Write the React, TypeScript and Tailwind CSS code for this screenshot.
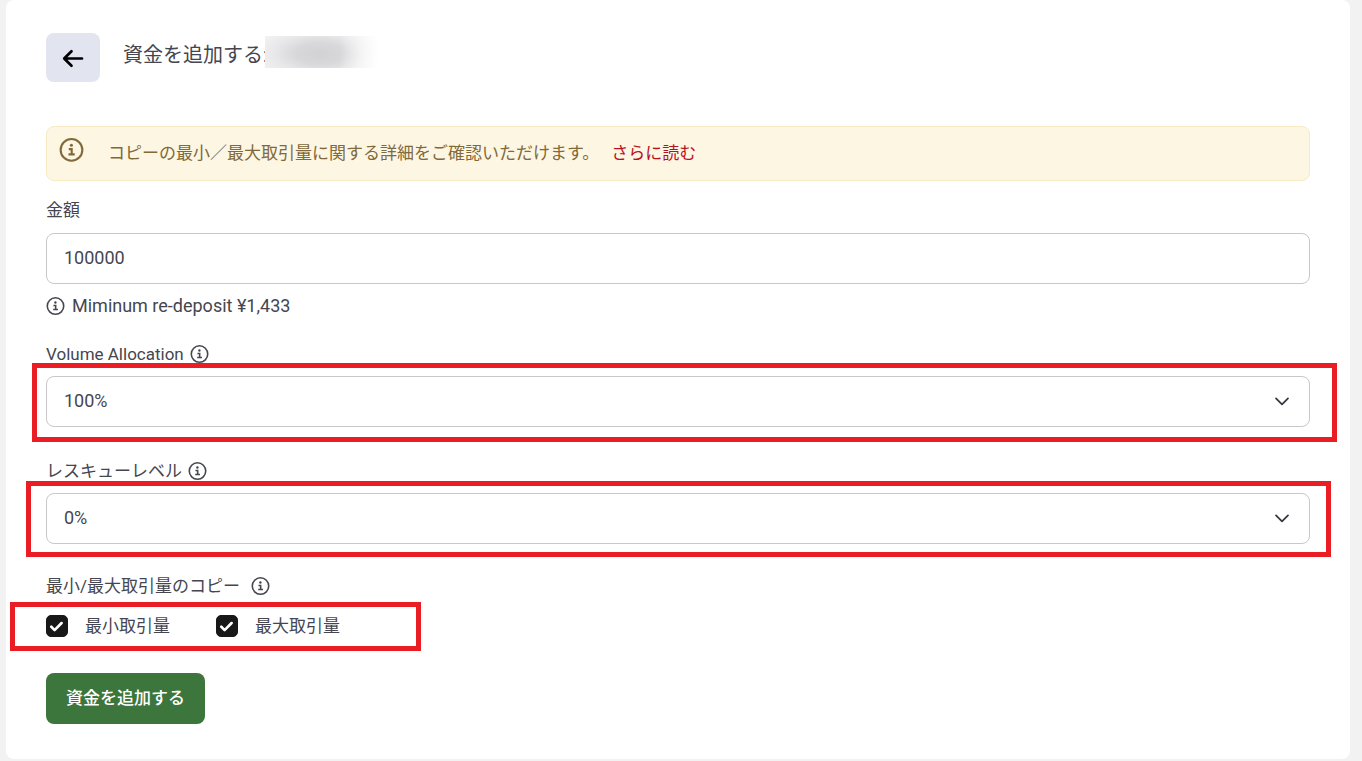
import { useState } from 'react';
import type { ReactNode } from 'react';

function InfoIcon({ className }: { className: string }) {
  return (
    <svg viewBox="0 0 24 24" fill="none" stroke="currentColor" strokeWidth="2" className={className} aria-hidden="true">
      <circle cx="12" cy="11.4" r="10.4" />
      <circle cx="11.9" cy="7" r="1.5" fill="currentColor" stroke="none" />
      <path d="M9.4 10.7h2.8v5M9.1 15.7h6" />
    </svg>
  );
}

function Highlight({ className }: { className: string }) {
  return <div className={`pointer-events-none absolute border-[5px] border-[#ea1c24] ${className}`} />;
}

type SelectFieldProps = {
  id: string;
  label: string;
  options: string[];
  children: ReactNode;
};

function SelectField({ id, label, options, children }: SelectFieldProps) {
  return (
    <div>
      <label htmlFor={id} className="mb-[9px] flex h-[26px] items-center gap-[6px]">
        {label}
        <InfoIcon className="size-[19px] overflow-visible" />
      </label>
      <div className="relative">
        <select
          id={id}
          className="block h-[51px] w-full appearance-none rounded-lg border border-[#c8c8cb] bg-white px-[17px] pb-[2px] text-[18px]"
        >
          {options.map((option) => (
            <option key={option}>{option}</option>
          ))}
        </select>
        <svg
          viewBox="0 0 16 16"
          fill="none"
          stroke="#343a40"
          strokeWidth="1.8"
          strokeLinecap="round"
          strokeLinejoin="round"
          className="pointer-events-none absolute top-[17px] right-5 size-4"
          aria-hidden="true"
        >
          <path d="m2 5.4 6 6 6-6" />
        </svg>
        {children}
      </div>
    </div>
  );
}

function CheckField({ label }: { label: string }) {
  const [checked, setChecked] = useState(true);
  return (
    <label className="flex items-center gap-[17px]">
      <span className="relative size-[22px]">
        <input
          type="checkbox"
          checked={checked}
          onChange={() => setChecked(!checked)}
          className="peer block size-[22px] appearance-none rounded-[5px] border border-[#181818] bg-white checked:bg-[#181818]"
        />
        <svg
          viewBox="0 0 20 20"
          fill="none"
          stroke="white"
          strokeWidth="2.4"
          strokeLinecap="round"
          strokeLinejoin="round"
          className="pointer-events-none absolute inset-0 hidden size-[22px] peer-checked:block"
          aria-hidden="true"
        >
          <path d="m4.8 10.7 3 3 6.4-6.4" />
        </svg>
      </span>
      {label}
    </label>
  );
}

export default function App() {
  const [amount, setAmount] = useState('100000');

  return (
    <div className="min-h-screen bg-[#f2f2f2] pr-3 pb-[2px] pl-[6px] font-[Roboto,'Noto_Sans_CJK_JP',sans-serif] text-[17px] leading-[26px] text-[#45464f]">
      <main className="rounded-lg bg-white px-10 pt-[33px] pb-[35px]">
        <header className="mb-11 flex items-start">
          <button
            type="button"
            aria-label="戻る"
            className="flex h-[49px] w-[54px] items-center justify-center rounded-lg bg-[#e2e5ef] text-black"
          >
            <svg
              viewBox="0 0 24 24"
              fill="none"
              stroke="currentColor"
              strokeWidth="2.7"
              strokeLinecap="round"
              strokeLinejoin="round"
              className="size-6"
              aria-hidden="true"
            >
              <path d="M21 12.5H3.5M10.5 5.2 3.2 12.5l7.3 7.3" />
            </svg>
          </button>
          <h1 className="ml-[23px] pt-[9px] text-[20px]">資金を追加する:</h1>
          <div className="-ml-[3px] mt-[3px] h-8 w-[114px] bg-[radial-gradient(ellipse_70px_30px_at_48%_55%,#d2d2d4_0%,#d8d8da_35%,#e8e8ea_65%,#f3f3f4_100%)] mask-r-from-65%" />
        </header>

        <div className="mb-4 flex h-[55px] items-start rounded-lg border border-[#f8ebc4] bg-[#fdf6e2] pl-3 text-[#80693a]">
          <InfoIcon className="mt-[11px] size-[25px]" />
          <p className="ml-6 pt-[13px]">
            コピーの最小／最大取引量に関する詳細をご確認いただけます。
            <a href="#" className="ml-3 text-[#b8101f]">
              さらに読む
            </a>
          </p>
        </div>

        <form onSubmit={(event) => event.preventDefault()}>
          <label htmlFor="amount" className="mb-[10px] block">
            金額
          </label>
          <input
            id="amount"
            type="text"
            inputMode="numeric"
            value={amount}
            onChange={(event) => setAmount(event.target.value)}
            className="block h-[51px] w-full rounded-lg border border-[#c8c8cb] bg-white px-[17px] pb-[2px] text-[18px]"
          />
          <p className="mt-[9px] mb-[22px] flex items-center gap-[7px] text-[18px]">
            <InfoIcon className="size-[19px] overflow-visible" />
            Miminum re-deposit ¥1,433
          </p>

          <div className="flex flex-col gap-[31px]">
            <SelectField id="volume" label="Volume Allocation" options={['100%', '75%', '50%', '25%']}>
              <Highlight className="-top-[13px] -right-[27px] -bottom-[15px] -left-[14px]" />
            </SelectField>
            <SelectField id="rescue" label="レスキューレベル" options={['0%', '25%', '50%', '75%']}>
              <Highlight className="-top-3 -right-[21px] -bottom-[13px] -left-5" />
            </SelectField>
          </div>

          <fieldset className="mt-[29px]">
            <legend className="mb-[14px] flex items-center gap-[11px]">
              最小/最大取引量のコピー
              <InfoIcon className="size-[19px] overflow-visible" />
            </legend>
            <div className="relative flex gap-[46px]">
              <CheckField label="最小取引量" />
              <CheckField label="最大取引量" />
              <Highlight className="-top-[11px] -bottom-3 -left-9 w-[411px]" />
            </div>
          </fieldset>

          <button
            type="submit"
            className="mt-[34px] h-[51px] rounded-lg bg-[#3c763c] px-5 pb-[2px] font-medium text-white"
          >
            資金を追加する
          </button>
        </form>
      </main>
    </div>
  );
}
